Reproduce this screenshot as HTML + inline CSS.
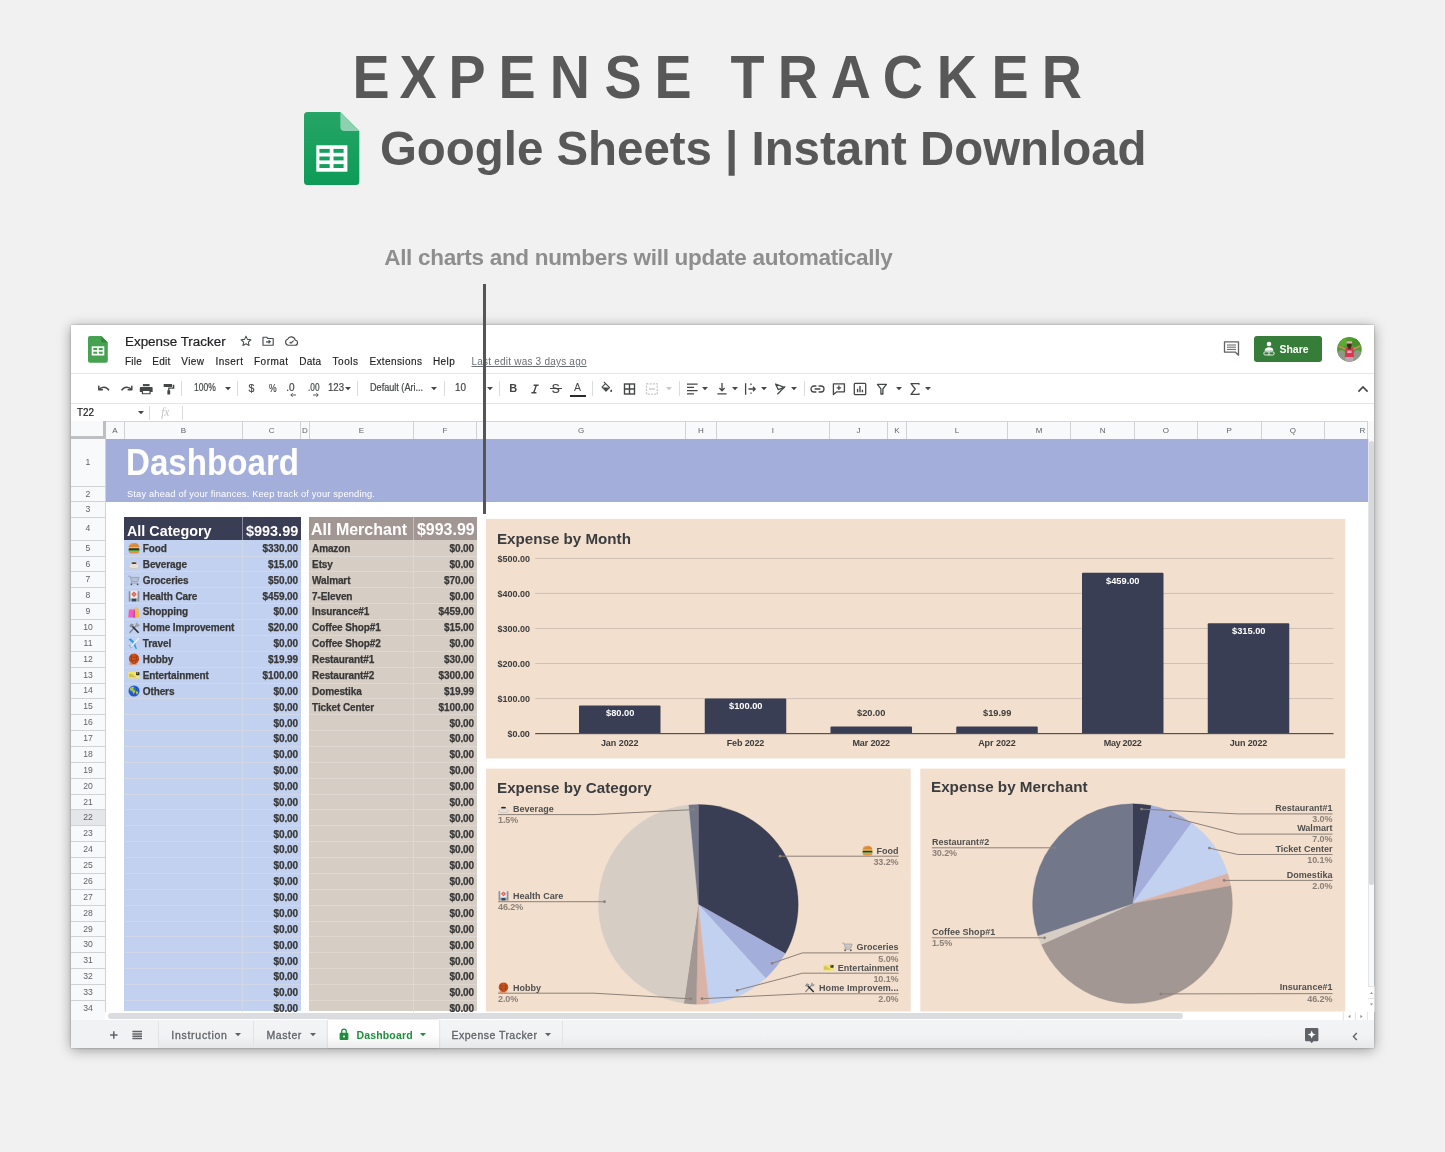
<!DOCTYPE html><html><head><meta charset="utf-8"><title>Expense Tracker</title><style>
html,body{margin:0;padding:0}body{width:1445px;height:1152px;overflow:hidden;position:relative;background:#f1f1f1;font-family:"Liberation Sans",sans-serif;}
.t{position:absolute;white-space:pre;margin:0;}.b{position:absolute;}svg{position:absolute;overflow:visible}
</style></head><body><div id="w" style="position:absolute;left:0;top:0;width:1445px;height:1152px;overflow:hidden;will-change:transform">
<div class="t" style="left:0;top:43px;width:1445px;height:68px;font-size:60.5px;line-height:68px;color:#585858;font-weight:bold;"><span style="position:absolute;left:350.57px;top:0;transform:scaleX(0.92);transform-origin:50% 50%;">E</span><span style="position:absolute;left:398.32px;top:0;transform:scaleX(0.92);transform-origin:50% 50%;">X</span><span style="position:absolute;left:446.68px;top:0;transform:scaleX(0.92);transform-origin:50% 50%;">P</span><span style="position:absolute;left:497.42px;top:0;transform:scaleX(0.92);transform-origin:50% 50%;">E</span><span style="position:absolute;left:548.05px;top:0;transform:scaleX(0.92);transform-origin:50% 50%;">N</span><span style="position:absolute;left:603.12px;top:0;transform:scaleX(0.92);transform-origin:50% 50%;">S</span><span style="position:absolute;left:652.82px;top:0;transform:scaleX(0.92);transform-origin:50% 50%;">E</span><span style="position:absolute;left:700px;top:0;opacity:0"> </span><span style="position:absolute;left:728.92px;top:0;transform:scaleX(0.92);transform-origin:50% 50%;">T</span><span style="position:absolute;left:776.34px;top:0;transform:scaleX(0.92);transform-origin:50% 50%;">R</span><span style="position:absolute;left:829.10px;top:0;transform:scaleX(0.92);transform-origin:50% 50%;">A</span><span style="position:absolute;left:881.02px;top:0;transform:scaleX(0.92);transform-origin:50% 50%;">C</span><span style="position:absolute;left:935.46px;top:0;transform:scaleX(0.92);transform-origin:50% 50%;">K</span><span style="position:absolute;left:990.37px;top:0;transform:scaleX(0.92);transform-origin:50% 50%;">E</span><span style="position:absolute;left:1040.04px;top:0;transform:scaleX(0.92);transform-origin:50% 50%;">R</span></div>
<div class="t" style="left:380.00px;top:121px;font-size:49px;line-height:54px;color:#585858;font-weight:bold;transform:scaleX(0.9674);transform-origin:0 0;">Google Sheets | Instant Download</div>
<div class="t" style="left:384.20px;top:245px;font-size:22.5px;line-height:25px;color:#8e8e8e;font-weight:bold;letter-spacing:-0.301px;">All charts and numbers will update automatically</div>
<svg style="left:303.5px;top:111.7px" width="55.3" height="73" viewBox="0 0 55.3 73">
<defs><linearGradient id="lg1" x1="0" y1="0" x2="0" y2="1"><stop offset="0" stop-color="#25a566"/><stop offset="1" stop-color="#0d9b57"/></linearGradient></defs>
<path d="M3.5 0H36.4L55.3 18.9V69.5a3.5 3.5 0 0 1-3.5 3.5H3.5A3.5 3.5 0 0 1 0 69.500V3.5A3.5 3.5 0 0 1 3.5 0Z" fill="url(#lg1)"/>
<path d="M36.4 0L55.3 18.9H40.4a4 4 0 0 1-4-4Z" fill="#8ed1b1"/>
<rect x="12.3" y="33.3" width="31.1" height="26.4" fill="#fff"/>
<g fill="#15a05d"><rect x="15.4" y="36.9" width="10.3" height="3.9"/><rect x="29.5" y="36.9" width="10.1" height="3.9"/>
<rect x="15.4" y="44.5" width="10.3" height="3.9"/><rect x="29.5" y="44.5" width="10.1" height="3.9"/>
<rect x="15.4" y="52.1" width="10.3" height="3.9"/><rect x="29.5" y="52.1" width="10.1" height="3.9"/></g>
</svg>
<div class="b" style="left:70.8px;top:324.7px;width:1303.4px;height:723.5px;background:#fff;box-shadow:0 1.5px 12px rgba(0,0,0,0.37),0 0 2px rgba(0,0,0,0.3);"></div>
<svg style="left:88.2px;top:335.8px" width="19.8" height="26.7" viewBox="0 0 19.8 26.7">
<path d="M2 0H13.2L19.8 6.6V24.7a2 2 0 0 1-2 2H2a2 2 0 0 1-2-2V2A2 2 0 0 1 2 0Z" fill="#46a150"/>
<path d="M13.2 0L19.8 6.6H14.6a1.4 1.4 0 0 1-1.4-1.4Z" fill="#2f8a3c"/>
<rect x="3.700" y="10.300" width="12.600" height="9.200" fill="#fff"/>
<g fill="#46a150"><rect x="5.300" y="12" width="3.900" height="2.100"/><rect x="10.800" y="12" width="3.900" height="2.100"/><rect x="5.300" y="15.700" width="3.900" height="2.100"/><rect x="10.800" y="15.700" width="3.900" height="2.100"/></g>
</svg>
<div class="t" style="left:124.70px;top:334px;font-size:13.7px;line-height:15px;color:#202124;transform:scaleX(0.9795);transform-origin:0 0;-webkit-text-stroke:0.2px #202124;">Expense Tracker</div>
<svg style="left:239px;top:334px" width="62" height="14" viewBox="0 0 62 14" fill="none" stroke="#4a4d51" stroke-width="1.150">
<path d="M7 1.6l1.600 3.600 3.900.4-2.900 2.600.8 3.800L7 10l-3.400 2 .8-3.800L1.500 5.600l3.900-.4Z" stroke-linejoin="round" transform="translate(7 7) scale(0.900) translate(-7 -7)"/>
<path d="M24 3.200h3.600l1.200 1.300h5.400v6.700H24Z" stroke-linejoin="round"/><path d="M27 7.800h4M29.600 6.200l1.600 1.600-1.600 1.600"/>
<path d="M49.500 11.200h6.400a2.500 2.500 0 0 0 .3-5 4 4 0 0 0-7.600-1 3.100 3.100 0 0 0 .9 6Z" stroke-linejoin="round"/><path d="M50.600 7.800l1.400 1.400 2.600-2.600"/>
</svg>
<div class="t" style="left:124.90px;top:356px;font-size:10px;line-height:11px;color:#202124;letter-spacing:0.269px;-webkit-text-stroke:0.15px #202124;">File</div>
<div class="t" style="left:152.30px;top:356px;font-size:10px;line-height:11px;color:#202124;letter-spacing:0.291px;-webkit-text-stroke:0.15px #202124;">Edit</div>
<div class="t" style="left:181.30px;top:356px;font-size:10px;line-height:11px;color:#202124;letter-spacing:0.425px;-webkit-text-stroke:0.15px #202124;">View</div>
<div class="t" style="left:215.60px;top:356px;font-size:10px;line-height:11px;color:#202124;letter-spacing:0.464px;-webkit-text-stroke:0.15px #202124;">Insert</div>
<div class="t" style="left:254.00px;top:356px;font-size:10px;line-height:11px;color:#202124;letter-spacing:0.488px;-webkit-text-stroke:0.15px #202124;">Format</div>
<div class="t" style="left:299.20px;top:356px;font-size:10px;line-height:11px;color:#202124;letter-spacing:0.219px;-webkit-text-stroke:0.15px #202124;">Data</div>
<div class="t" style="left:332.50px;top:356px;font-size:10px;line-height:11px;color:#202124;letter-spacing:0.548px;-webkit-text-stroke:0.15px #202124;">Tools</div>
<div class="t" style="left:369.40px;top:356px;font-size:10px;line-height:11px;color:#202124;letter-spacing:0.398px;-webkit-text-stroke:0.15px #202124;">Extensions</div>
<div class="t" style="left:432.90px;top:356px;font-size:10px;line-height:11px;color:#202124;letter-spacing:0.455px;-webkit-text-stroke:0.15px #202124;">Help</div>
<div class="t" style="left:471.50px;top:356px;font-size:10px;line-height:11px;color:#6a6e73;letter-spacing:0.213px;text-decoration:underline;">Last edit was 3 days ago</div>
<svg style="left:1223px;top:340px" width="17" height="17" viewBox="0 0 17 17" fill="none" stroke="#5f6368" stroke-width="1.3"><path d="M1.500 1.800h14v13.400l-3-3H1.500Z" stroke-linejoin="round"/><path d="M4 5h9M4 7.200h9M4 9.400h9" stroke-width="1"/></svg>
<div class="b" style="left:1254.40px;top:335.70px;width:67.40px;height:26.80px;background:#357d38;border-radius:3px;"></div>
<svg style="left:1263px;top:341px" width="12" height="15" viewBox="0 0 12 15" fill="#fff"><circle cx="6" cy="3" r="2.300"/><path d="M1.600 9.800c0-2.300 2-3.500 4.400-3.500s4.400 1.200 4.400 3.500Z"/><rect x="0.800" y="10.800" width="10.400" height="3.200" rx="1.600" fill="none" stroke="#fff" stroke-width="0.9"/><path d="M6 10.800v3.200" stroke="#fff" stroke-width="0.900"/></svg>
<div class="t" style="left:1279.40px;top:343px;font-size:10.5px;line-height:12px;color:#fff;font-weight:bold;">Share</div>
<svg style="left:1336.500px;top:336.500px" width="24.800" height="24.800" viewBox="0 0 24.800 24.800"><defs><clipPath id="av"><circle cx="12.400" cy="12.400" r="12.300"/></clipPath></defs>
<g clip-path="url(#av)"><rect width="25" height="25" fill="#4f9c2c"/><circle cx="6" cy="5" r="4" fill="#5cab33"/><circle cx="19" cy="6" r="4" fill="#46902a"/>
<ellipse cx="4.500" cy="19" rx="4.500" ry="6" fill="#8f9a86"/><ellipse cx="20.500" cy="19" rx="4.500" ry="6" fill="#8f9a86"/>
<path d="M2.200 9.200l7 3.200M22.600 9.200l-7 3.200" stroke="#c98c62" stroke-width="1.700" stroke-linecap="round"/>
<path d="M8.600 11.200c2.400-1 5.200-1 7.600 0l.8 9H7.800Z" fill="#dc3550"/><rect x="8.200" y="20" width="8.400" height="5" fill="#b9a3b3"/><rect x="10.200" y="13.600" width="4.400" height="2.400" fill="#e9a9b5"/>
<circle cx="12.400" cy="8" r="2.500" fill="#5a3324"/><path d="M10.800 7.200h3.200v5h-3.200Z" fill="#3a2118" opacity="0.700"/><rect x="9.600" y="4.300" width="5.600" height="2.300" rx="1.100" fill="#eaa7b6"/></g></svg>
<div class="b" style="left:70.80px;top:372.60px;width:1303.40px;height:1.00px;background:#e3e5e9;"></div>
<svg style="left:97px;top:381px" width="80" height="16" viewBox="0 0 80 16" fill="none" stroke="#444746" stroke-width="1.500">
<path d="M1.800 5.200v3.600h3.600" stroke-linejoin="round" stroke-linecap="round"/><path d="M2 8.600c2.600-3 7.400-3.400 10 .8"/>
<path d="M34.800 5.200v3.600h-3.600" stroke-linejoin="round" stroke-linecap="round"/><path d="M34.600 8.600c-2.600-3-7.400-3.400-10 .8"/>
<g stroke="none" fill="#444746" transform="translate(49.400 8) scale(0.880) translate(-49.400 -8)"><rect x="45.400" y="2.400" width="7.600" height="2.400"/><path d="M43.200 5.600h12a1.300 1.300 0 0 1 1.300 1.300v4.500h-2.300v2.600h-10v-2.600h-2.300V6.900a1.300 1.300 0 0 1 1.300-1.300Zm2.400 4.600v2.600h7.200v-2.600Z" fill-rule="evenodd"/>
</g><g stroke="none" fill="#444746" transform="translate(71.600 8) scale(0.880) translate(-71.600 -8)"><path d="M66 2.200h9.500v3.600H66Zm10.300 1h1.800v4.600h-5.600v1.500h.9v5h-3.200v-5h.9V6.400h5.200Z"/></g>
</svg>
<div class="b" style="left:181.20px;top:381.00px;width:1.00px;height:15.00px;background:#dadce0;"></div>
<div class="t" style="left:193.60px;top:382px;font-size:10px;line-height:11px;color:#444746;transform:scaleX(0.8523);transform-origin:0 0;-webkit-text-stroke:0.2px #444746;">100%</div>
<svg style="left:224.8px;top:387.3px" width="6" height="3.600" viewBox="0 0 6 3.600"><path d="M0 0h6L3 3.200Z" fill="#444746"/></svg>
<div class="b" style="left:236.90px;top:381.00px;width:1.00px;height:15.00px;background:#dadce0;"></div>
<div class="t" style="left:248.38px;top:382px;font-size:10.5px;line-height:12px;color:#444746;-webkit-text-stroke:0.2px #444746;">$</div>
<div class="t" style="left:268.60px;top:382px;font-size:10.5px;line-height:12px;color:#444746;transform:scaleX(0.8134);transform-origin:0 0;-webkit-text-stroke:0.2px #444746;">%</div>
<div class="t" style="left:286.13px;top:382px;font-size:10px;line-height:11px;color:#444746;-webkit-text-stroke:0.2px #444746;">.0</div>
<div class="t" style="left:308.05px;top:382px;font-size:10px;line-height:11px;color:#444746;transform:scaleX(0.8270);transform-origin:0 0;-webkit-text-stroke:0.2px #444746;">.00</div>
<svg style="left:289px;top:391.500px" width="32" height="6" viewBox="0 0 32 6" fill="none" stroke="#444746" stroke-width="0.900"><path d="M7 3H1.800M3.600 1.200L1.800 3l1.800 1.800"/><path d="M24 3h5.200M27.400 1.200L29.200 3l-1.800 1.800"/></svg>
<div class="t" style="left:327.60px;top:382px;font-size:10px;line-height:11px;color:#444746;transform:scaleX(0.9588);transform-origin:0 0;-webkit-text-stroke:0.2px #444746;">123</div>
<svg style="left:344.8px;top:387.3px" width="6" height="3.600" viewBox="0 0 6 3.600"><path d="M0 0h6L3 3.200Z" fill="#444746"/></svg>
<div class="b" style="left:357.30px;top:381.00px;width:1.00px;height:15.00px;background:#dadce0;"></div>
<div class="t" style="left:369.60px;top:382px;font-size:10px;line-height:11px;color:#444746;transform:scaleX(0.9099);transform-origin:0 0;-webkit-text-stroke:0.2px #444746;">Default (Ari...</div>
<svg style="left:430.7px;top:387.3px" width="6" height="3.600" viewBox="0 0 6 3.600"><path d="M0 0h6L3 3.200Z" fill="#444746"/></svg>
<div class="b" style="left:443.50px;top:381.00px;width:1.00px;height:15.00px;background:#dadce0;"></div>
<div class="t" style="left:455.30px;top:382px;font-size:10px;line-height:11px;color:#444746;transform:scaleX(0.9888);transform-origin:0 0;-webkit-text-stroke:0.2px #444746;">10</div>
<svg style="left:487.4px;top:387.3px" width="6" height="3.600" viewBox="0 0 6 3.600"><path d="M0 0h6L3 3.200Z" fill="#444746"/></svg>
<div class="b" style="left:499.00px;top:381.00px;width:1.00px;height:15.00px;background:#dadce0;"></div>
<div class="t" style="left:509.22px;top:382px;font-size:11px;line-height:12px;color:#444746;font-weight:bold;">B</div>
<svg style="left:529.800px;top:383.500px" width="10" height="10" viewBox="0 0 10 10" fill="none" stroke="#444746" stroke-width="1.300"><path d="M3.600 1.200h5M1.400 8.800h5M6.300 1.200L3.700 8.800" stroke-width="1.400"/></svg>
<div class="t" style="left:551.79px;top:382px;font-size:12px;line-height:14px;color:#444746;-webkit-text-stroke:0.2px #444746;">S</div>
<div class="b" style="left:549.80px;top:387.90px;width:12.00px;height:1.10px;background:#444746;"></div>
<div class="t" style="left:574.09px;top:381px;font-size:10.5px;line-height:12px;color:#444746;">A</div>
<div class="b" style="left:570.30px;top:394.80px;width:15.40px;height:2.40px;background:#2b2b2b;"></div>
<div class="b" style="left:592.00px;top:381.00px;width:1.00px;height:15.00px;background:#dadce0;"></div>
<svg style="left:599px;top:381px" width="64" height="16" viewBox="0 0 64 16" fill="none" stroke="#444746" stroke-width="1.300">
<path d="M6.600 2.600l4 4-3.600 3.600-4-4Z" stroke-width="1.100" stroke-linejoin="round"/><path d="M3.600 6.600h6.400L7 9.800Z" fill="#444746" stroke="none"/><path d="M6.600 2.600L5 1" stroke-width="1.100"/><path d="M12.200 8.200c.6.900 1 1.400 1 1.900a1 1 0 0 1-2 0c0-.5.400-1 1-1.900Z" fill="#444746" stroke="none"/>
<rect x="25.500" y="3" width="10" height="10" stroke-width="1.400"/><path d="M30.500 3v10M25.500 8h10" stroke-width="1.400"/>
<g stroke="#c4c7c5" stroke-dasharray="2 1.200"><rect x="47.500" y="2.800" width="10.800" height="10.400"/></g><path d="M50 8h6" stroke="#c4c7c5"/>
</svg>
<svg style="left:666.0px;top:387.3px" width="6" height="3.600" viewBox="0 0 6 3.600"><path d="M0 0h6L3 3.200Z" fill="#c4c7c5"/></svg>
<div class="b" style="left:678.90px;top:381.00px;width:1.00px;height:15.00px;background:#dadce0;"></div>
<svg style="left:685px;top:381px" width="110" height="16" viewBox="0 0 110 16" fill="none" stroke="#444746" stroke-width="1.300">
<path d="M2 3.200h10.600M2 6.400h7M2 9.600h10.600M2 12.800h7"/>
<path d="M37 2v7.600M34.400 7l2.600 2.800L39.600 7M32.400 12.800h9.200"/>
<path d="M60.600 2.200v11.600"/><path d="M63.500 8h6.500M68 5.800L70.200 8 68 10.200" /><path d="M66 2.600v2M66 11.400v2" stroke-dasharray="1.300 1"/>
<path d="M90.600 3l8.600 3.400-6 2.200Z" stroke-linejoin="round"/><path d="M92.400 13.200l7.800-7.800"/>
</svg>
<svg style="left:702.4px;top:387.3px" width="6" height="3.600" viewBox="0 0 6 3.600"><path d="M0 0h6L3 3.200Z" fill="#444746"/></svg>
<svg style="left:731.9px;top:387.3px" width="6" height="3.600" viewBox="0 0 6 3.600"><path d="M0 0h6L3 3.200Z" fill="#444746"/></svg>
<svg style="left:761.1px;top:387.3px" width="6" height="3.600" viewBox="0 0 6 3.600"><path d="M0 0h6L3 3.200Z" fill="#444746"/></svg>
<svg style="left:790.6px;top:387.3px" width="6" height="3.600" viewBox="0 0 6 3.600"><path d="M0 0h6L3 3.200Z" fill="#444746"/></svg>
<div class="b" style="left:803.50px;top:381.00px;width:1.00px;height:15.00px;background:#dadce0;"></div>
<svg style="left:809px;top:381px" width="112" height="16" viewBox="0 0 112 16" fill="none" stroke="#444746" stroke-width="1.300">
<path d="M7.400 5H5a3 3 0 0 0 0 6h2.400M9.600 5H12a3 3 0 0 1 0 6H9.600M5.600 8h5.800"/>
<path d="M24.400 2.800h11v8h-7.600l-3.400 2.800Z" stroke-linejoin="round"/><path d="M29.900 4.600v4.400M27.700 6.800h4.400"/>
<rect x="45.300" y="2.300" width="11.400" height="11.400" rx="1"/><path d="M48.600 11.200V7.800M51 11.200V5M53.400 11.200V8.800" stroke-width="1.400"/>
<path d="M68.400 3.400h9l-3.500 4.400v5.200h-2V7.800Z" stroke-linejoin="round"/>
<path d="M110 3.800V2.600h-8l4.200 5.400-4.200 5.400h8v-1.200" stroke-linejoin="round"/>
</svg>
<svg style="left:895.5px;top:387.3px" width="6" height="3.600" viewBox="0 0 6 3.600"><path d="M0 0h6L3 3.200Z" fill="#444746"/></svg>
<svg style="left:925.1px;top:387.3px" width="6" height="3.600" viewBox="0 0 6 3.600"><path d="M0 0h6L3 3.200Z" fill="#444746"/></svg>
<svg style="left:1357px;top:384.500px" width="12" height="8" viewBox="0 0 12 8" fill="none" stroke="#444746" stroke-width="1.600"><path d="M1.400 6.600L6 2l4.600 4.600"/></svg>
<div class="b" style="left:70.80px;top:403.00px;width:1303.40px;height:1.00px;background:#e3e5e9;"></div>
<div class="t" style="left:77.20px;top:407px;font-size:10px;line-height:11px;color:#202124;transform:scaleX(0.9864);transform-origin:0 0;-webkit-text-stroke:0.2px #202124;">T22</div>
<svg style="left:138px;top:410.800px" width="6" height="3.600" viewBox="0 0 6 3.600"><path d="M0 0h6L3 3.200Z" fill="#444746"/></svg>
<div class="b" style="left:148.80px;top:405.50px;width:1.00px;height:14.00px;background:#dadce0;"></div>
<div class="t" style="left:161.14px;top:406px;font-size:11.5px;line-height:12px;color:#c0c3c7;font-style:italic;font-family:'Liberation Serif',serif;">fx</div>
<div class="b" style="left:182.20px;top:405.50px;width:1.00px;height:14.00px;background:#dadce0;"></div>
<div class="b" style="left:70.80px;top:421.00px;width:1296.70px;height:18.00px;background:#f8f9fa;"></div>
<div class="b" style="left:70.80px;top:420.50px;width:1303.40px;height:1.00px;background:#d5d7db;"></div>
<div class="b" style="left:105.50px;top:438.50px;width:1262.00px;height:1.00px;background:#d0d2d6;"></div>
<div class="t" style="left:112.18px;top:426px;font-size:8px;line-height:9px;color:#5f6368;">A</div>
<div class="b" style="left:124.00px;top:421.00px;width:1.00px;height:18.00px;background:#d0d2d6;"></div>
<div class="t" style="left:180.83px;top:426px;font-size:8px;line-height:9px;color:#5f6368;">B</div>
<div class="b" style="left:242.00px;top:421.00px;width:1.00px;height:18.00px;background:#d0d2d6;"></div>
<div class="t" style="left:268.76px;top:426px;font-size:8px;line-height:9px;color:#5f6368;">C</div>
<div class="b" style="left:300.30px;top:421.00px;width:1.00px;height:18.00px;background:#d0d2d6;"></div>
<div class="t" style="left:302.11px;top:426px;font-size:8px;line-height:9px;color:#5f6368;">D</div>
<div class="b" style="left:308.70px;top:421.00px;width:1.00px;height:18.00px;background:#d0d2d6;"></div>
<div class="t" style="left:358.68px;top:426px;font-size:8px;line-height:9px;color:#5f6368;">E</div>
<div class="b" style="left:413.00px;top:421.00px;width:1.00px;height:18.00px;background:#d0d2d6;"></div>
<div class="t" style="left:442.60px;top:426px;font-size:8px;line-height:9px;color:#5f6368;">F</div>
<div class="b" style="left:476.10px;top:421.00px;width:1.00px;height:18.00px;background:#d0d2d6;"></div>
<div class="t" style="left:578.08px;top:426px;font-size:8px;line-height:9px;color:#5f6368;">G</div>
<div class="b" style="left:685.30px;top:421.00px;width:1.00px;height:18.00px;background:#d0d2d6;"></div>
<div class="t" style="left:698.01px;top:426px;font-size:8px;line-height:9px;color:#5f6368;">H</div>
<div class="b" style="left:715.50px;top:421.00px;width:1.00px;height:18.00px;background:#d0d2d6;"></div>
<div class="t" style="left:771.73px;top:426px;font-size:8px;line-height:9px;color:#5f6368;">I</div>
<div class="b" style="left:829.20px;top:421.00px;width:1.00px;height:18.00px;background:#d0d2d6;"></div>
<div class="t" style="left:856.50px;top:426px;font-size:8px;line-height:9px;color:#5f6368;">J</div>
<div class="b" style="left:886.80px;top:421.00px;width:1.00px;height:18.00px;background:#d0d2d6;"></div>
<div class="t" style="left:894.28px;top:426px;font-size:8px;line-height:9px;color:#5f6368;">K</div>
<div class="b" style="left:906.10px;top:421.00px;width:1.00px;height:18.00px;background:#d0d2d6;"></div>
<div class="t" style="left:954.82px;top:426px;font-size:8px;line-height:9px;color:#5f6368;">L</div>
<div class="b" style="left:1007.00px;top:421.00px;width:1.00px;height:18.00px;background:#d0d2d6;"></div>
<div class="t" style="left:1035.81px;top:426px;font-size:8px;line-height:9px;color:#5f6368;">M</div>
<div class="b" style="left:1070.30px;top:421.00px;width:1.00px;height:18.00px;background:#d0d2d6;"></div>
<div class="t" style="left:1099.66px;top:426px;font-size:8px;line-height:9px;color:#5f6368;">N</div>
<div class="b" style="left:1133.80px;top:421.00px;width:1.00px;height:18.00px;background:#d0d2d6;"></div>
<div class="t" style="left:1162.78px;top:426px;font-size:8px;line-height:9px;color:#5f6368;">O</div>
<div class="b" style="left:1197.00px;top:421.00px;width:1.00px;height:18.00px;background:#d0d2d6;"></div>
<div class="t" style="left:1226.58px;top:426px;font-size:8px;line-height:9px;color:#5f6368;">P</div>
<div class="b" style="left:1260.50px;top:421.00px;width:1.00px;height:18.00px;background:#d0d2d6;"></div>
<div class="t" style="left:1289.68px;top:426px;font-size:8px;line-height:9px;color:#5f6368;">Q</div>
<div class="b" style="left:1324.10px;top:421.00px;width:1.00px;height:18.00px;background:#d0d2d6;"></div>
<div class="t" style="left:1359.61px;top:426px;font-size:8px;line-height:9px;color:#5f6368;">R</div>
<div class="b" style="left:1367.00px;top:421.00px;width:1.00px;height:18.00px;background:#d0d2d6;"></div>
<div class="b" style="left:70.80px;top:421.00px;width:34.50px;height:18.00px;background:#f8f9fa;"></div>
<div class="b" style="left:102.50px;top:421.00px;width:3.00px;height:18.00px;background:#bdbfc3;"></div>
<div class="b" style="left:70.80px;top:436.00px;width:34.50px;height:3.00px;background:#bdbfc3;"></div>
<div class="b" style="left:70.80px;top:439.00px;width:34.50px;height:572.50px;background:#f8f9fa;"></div>
<div class="b" style="left:105.00px;top:439.00px;width:1.00px;height:572.50px;background:#d0d2d6;"></div>
<div class="b" style="left:70.80px;top:486.10px;width:34.50px;height:1.00px;background:#d0d2d6;"></div>
<div class="t" style="left:85.61px;top:457px;font-size:8.6px;line-height:10px;color:#5f6368;">1</div>
<div class="b" style="left:70.80px;top:501.00px;width:34.50px;height:1.00px;background:#d0d2d6;"></div>
<div class="t" style="left:85.61px;top:489px;font-size:8.6px;line-height:10px;color:#5f6368;">2</div>
<div class="b" style="left:70.80px;top:516.50px;width:34.50px;height:1.00px;background:#d0d2d6;"></div>
<div class="t" style="left:85.61px;top:504px;font-size:8.6px;line-height:10px;color:#5f6368;">3</div>
<div class="b" style="left:70.80px;top:539.70px;width:34.50px;height:1.00px;background:#d0d2d6;"></div>
<div class="t" style="left:85.61px;top:523px;font-size:8.6px;line-height:10px;color:#5f6368;">4</div>
<div class="b" style="left:70.80px;top:555.57px;width:34.50px;height:1.00px;background:#d0d2d6;"></div>
<div class="t" style="left:85.61px;top:543px;font-size:8.6px;line-height:10px;color:#5f6368;">5</div>
<div class="b" style="left:70.80px;top:571.44px;width:34.50px;height:1.00px;background:#d0d2d6;"></div>
<div class="t" style="left:85.61px;top:559px;font-size:8.6px;line-height:10px;color:#5f6368;">6</div>
<div class="b" style="left:70.80px;top:587.31px;width:34.50px;height:1.00px;background:#d0d2d6;"></div>
<div class="t" style="left:85.61px;top:574px;font-size:8.6px;line-height:10px;color:#5f6368;">7</div>
<div class="b" style="left:70.80px;top:603.18px;width:34.50px;height:1.00px;background:#d0d2d6;"></div>
<div class="t" style="left:85.61px;top:590px;font-size:8.6px;line-height:10px;color:#5f6368;">8</div>
<div class="b" style="left:70.80px;top:619.05px;width:34.50px;height:1.00px;background:#d0d2d6;"></div>
<div class="t" style="left:85.61px;top:606px;font-size:8.6px;line-height:10px;color:#5f6368;">9</div>
<div class="b" style="left:70.80px;top:634.92px;width:34.50px;height:1.00px;background:#d0d2d6;"></div>
<div class="t" style="left:83.22px;top:622px;font-size:8.6px;line-height:10px;color:#5f6368;">10</div>
<div class="b" style="left:70.80px;top:650.79px;width:34.50px;height:1.00px;background:#d0d2d6;"></div>
<div class="t" style="left:83.54px;top:638px;font-size:8.6px;line-height:10px;color:#5f6368;">11</div>
<div class="b" style="left:70.80px;top:666.66px;width:34.50px;height:1.00px;background:#d0d2d6;"></div>
<div class="t" style="left:83.22px;top:654px;font-size:8.6px;line-height:10px;color:#5f6368;">12</div>
<div class="b" style="left:70.80px;top:682.53px;width:34.50px;height:1.00px;background:#d0d2d6;"></div>
<div class="t" style="left:83.22px;top:670px;font-size:8.6px;line-height:10px;color:#5f6368;">13</div>
<div class="b" style="left:70.80px;top:698.40px;width:34.50px;height:1.00px;background:#d0d2d6;"></div>
<div class="t" style="left:83.22px;top:685px;font-size:8.6px;line-height:10px;color:#5f6368;">14</div>
<div class="b" style="left:70.80px;top:714.27px;width:34.50px;height:1.00px;background:#d0d2d6;"></div>
<div class="t" style="left:83.22px;top:701px;font-size:8.6px;line-height:10px;color:#5f6368;">15</div>
<div class="b" style="left:70.80px;top:730.14px;width:34.50px;height:1.00px;background:#d0d2d6;"></div>
<div class="t" style="left:83.22px;top:717px;font-size:8.6px;line-height:10px;color:#5f6368;">16</div>
<div class="b" style="left:70.80px;top:746.01px;width:34.50px;height:1.00px;background:#d0d2d6;"></div>
<div class="t" style="left:83.22px;top:733px;font-size:8.6px;line-height:10px;color:#5f6368;">17</div>
<div class="b" style="left:70.80px;top:761.88px;width:34.50px;height:1.00px;background:#d0d2d6;"></div>
<div class="t" style="left:83.22px;top:749px;font-size:8.6px;line-height:10px;color:#5f6368;">18</div>
<div class="b" style="left:70.80px;top:777.75px;width:34.50px;height:1.00px;background:#d0d2d6;"></div>
<div class="t" style="left:83.22px;top:765px;font-size:8.6px;line-height:10px;color:#5f6368;">19</div>
<div class="b" style="left:70.80px;top:793.62px;width:34.50px;height:1.00px;background:#d0d2d6;"></div>
<div class="t" style="left:83.22px;top:781px;font-size:8.6px;line-height:10px;color:#5f6368;">20</div>
<div class="b" style="left:70.80px;top:809.49px;width:34.50px;height:1.00px;background:#d0d2d6;"></div>
<div class="t" style="left:83.22px;top:797px;font-size:8.6px;line-height:10px;color:#5f6368;">21</div>
<div class="b" style="left:70.80px;top:809.99px;width:34.00px;height:15.87px;background:#e4e6ea;"></div>
<div class="b" style="left:70.80px;top:825.36px;width:34.50px;height:1.00px;background:#d0d2d6;"></div>
<div class="t" style="left:83.22px;top:812px;font-size:8.6px;line-height:10px;color:#5f6368;">22</div>
<div class="b" style="left:70.80px;top:841.23px;width:34.50px;height:1.00px;background:#d0d2d6;"></div>
<div class="t" style="left:83.22px;top:828px;font-size:8.6px;line-height:10px;color:#5f6368;">23</div>
<div class="b" style="left:70.80px;top:857.10px;width:34.50px;height:1.00px;background:#d0d2d6;"></div>
<div class="t" style="left:83.22px;top:844px;font-size:8.6px;line-height:10px;color:#5f6368;">24</div>
<div class="b" style="left:70.80px;top:872.97px;width:34.50px;height:1.00px;background:#d0d2d6;"></div>
<div class="t" style="left:83.22px;top:860px;font-size:8.6px;line-height:10px;color:#5f6368;">25</div>
<div class="b" style="left:70.80px;top:888.84px;width:34.50px;height:1.00px;background:#d0d2d6;"></div>
<div class="t" style="left:83.22px;top:876px;font-size:8.6px;line-height:10px;color:#5f6368;">26</div>
<div class="b" style="left:70.80px;top:904.71px;width:34.50px;height:1.00px;background:#d0d2d6;"></div>
<div class="t" style="left:83.22px;top:892px;font-size:8.6px;line-height:10px;color:#5f6368;">27</div>
<div class="b" style="left:70.80px;top:920.58px;width:34.50px;height:1.00px;background:#d0d2d6;"></div>
<div class="t" style="left:83.22px;top:908px;font-size:8.6px;line-height:10px;color:#5f6368;">28</div>
<div class="b" style="left:70.80px;top:936.45px;width:34.50px;height:1.00px;background:#d0d2d6;"></div>
<div class="t" style="left:83.22px;top:924px;font-size:8.6px;line-height:10px;color:#5f6368;">29</div>
<div class="b" style="left:70.80px;top:952.32px;width:34.50px;height:1.00px;background:#d0d2d6;"></div>
<div class="t" style="left:83.22px;top:939px;font-size:8.6px;line-height:10px;color:#5f6368;">30</div>
<div class="b" style="left:70.80px;top:968.19px;width:34.50px;height:1.00px;background:#d0d2d6;"></div>
<div class="t" style="left:83.22px;top:955px;font-size:8.6px;line-height:10px;color:#5f6368;">31</div>
<div class="b" style="left:70.80px;top:984.06px;width:34.50px;height:1.00px;background:#d0d2d6;"></div>
<div class="t" style="left:83.22px;top:971px;font-size:8.6px;line-height:10px;color:#5f6368;">32</div>
<div class="b" style="left:70.80px;top:999.93px;width:34.50px;height:1.00px;background:#d0d2d6;"></div>
<div class="t" style="left:83.22px;top:987px;font-size:8.6px;line-height:10px;color:#5f6368;">33</div>
<div class="t" style="left:83.22px;top:1003px;font-size:8.6px;line-height:10px;color:#5f6368;">34</div>
<div class="b" style="left:105.50px;top:439.00px;width:1262.00px;height:62.50px;background:#a3aeda;"></div>
<div class="t" style="left:126.30px;top:441px;font-size:37.6px;line-height:42px;color:#fff;font-weight:bold;transform:scaleX(0.8814);transform-origin:0 0;">Dashboard</div>
<div class="t" style="left:127.00px;top:489px;font-size:9.3px;line-height:10px;color:#fff;letter-spacing:0.163px;">Stay ahead of your finances. Keep track of your spending.</div>
<div class="b" style="left:124.30px;top:517.00px;width:176.50px;height:23.20px;background:#3a3e54;"></div>
<div class="b" style="left:309.20px;top:517.00px;width:167.80px;height:23.20px;background:#a39793;"></div>
<div class="b" style="left:124.30px;top:540.20px;width:176.50px;height:471.30px;background:#c2d1f0;"></div>
<div class="b" style="left:309.20px;top:540.20px;width:167.80px;height:471.30px;background:#d6cdc5;"></div>
<div class="b" style="left:124.30px;top:555.57px;width:176.50px;height:1.00px;background:#d0d7e6;"></div>
<div class="b" style="left:309.20px;top:555.57px;width:167.80px;height:1.00px;background:#ded8d2;"></div>
<div class="b" style="left:124.30px;top:571.44px;width:176.50px;height:1.00px;background:#d0d7e6;"></div>
<div class="b" style="left:309.20px;top:571.44px;width:167.80px;height:1.00px;background:#ded8d2;"></div>
<div class="b" style="left:124.30px;top:587.31px;width:176.50px;height:1.00px;background:#d0d7e6;"></div>
<div class="b" style="left:309.20px;top:587.31px;width:167.80px;height:1.00px;background:#ded8d2;"></div>
<div class="b" style="left:124.30px;top:603.18px;width:176.50px;height:1.00px;background:#d0d7e6;"></div>
<div class="b" style="left:309.20px;top:603.18px;width:167.80px;height:1.00px;background:#ded8d2;"></div>
<div class="b" style="left:124.30px;top:619.05px;width:176.50px;height:1.00px;background:#d0d7e6;"></div>
<div class="b" style="left:309.20px;top:619.05px;width:167.80px;height:1.00px;background:#ded8d2;"></div>
<div class="b" style="left:124.30px;top:634.92px;width:176.50px;height:1.00px;background:#d0d7e6;"></div>
<div class="b" style="left:309.20px;top:634.92px;width:167.80px;height:1.00px;background:#ded8d2;"></div>
<div class="b" style="left:124.30px;top:650.79px;width:176.50px;height:1.00px;background:#d0d7e6;"></div>
<div class="b" style="left:309.20px;top:650.79px;width:167.80px;height:1.00px;background:#ded8d2;"></div>
<div class="b" style="left:124.30px;top:666.66px;width:176.50px;height:1.00px;background:#d0d7e6;"></div>
<div class="b" style="left:309.20px;top:666.66px;width:167.80px;height:1.00px;background:#ded8d2;"></div>
<div class="b" style="left:124.30px;top:682.53px;width:176.50px;height:1.00px;background:#d0d7e6;"></div>
<div class="b" style="left:309.20px;top:682.53px;width:167.80px;height:1.00px;background:#ded8d2;"></div>
<div class="b" style="left:124.30px;top:698.40px;width:176.50px;height:1.00px;background:#d0d7e6;"></div>
<div class="b" style="left:309.20px;top:698.40px;width:167.80px;height:1.00px;background:#ded8d2;"></div>
<div class="b" style="left:124.30px;top:714.27px;width:176.50px;height:1.00px;background:#d0d7e6;"></div>
<div class="b" style="left:309.20px;top:714.27px;width:167.80px;height:1.00px;background:#ded8d2;"></div>
<div class="b" style="left:124.30px;top:730.14px;width:176.50px;height:1.00px;background:#d0d7e6;"></div>
<div class="b" style="left:309.20px;top:730.14px;width:167.80px;height:1.00px;background:#ded8d2;"></div>
<div class="b" style="left:124.30px;top:746.01px;width:176.50px;height:1.00px;background:#d0d7e6;"></div>
<div class="b" style="left:309.20px;top:746.01px;width:167.80px;height:1.00px;background:#ded8d2;"></div>
<div class="b" style="left:124.30px;top:761.88px;width:176.50px;height:1.00px;background:#d0d7e6;"></div>
<div class="b" style="left:309.20px;top:761.88px;width:167.80px;height:1.00px;background:#ded8d2;"></div>
<div class="b" style="left:124.30px;top:777.75px;width:176.50px;height:1.00px;background:#d0d7e6;"></div>
<div class="b" style="left:309.20px;top:777.75px;width:167.80px;height:1.00px;background:#ded8d2;"></div>
<div class="b" style="left:124.30px;top:793.62px;width:176.50px;height:1.00px;background:#d0d7e6;"></div>
<div class="b" style="left:309.20px;top:793.62px;width:167.80px;height:1.00px;background:#ded8d2;"></div>
<div class="b" style="left:124.30px;top:809.49px;width:176.50px;height:1.00px;background:#d0d7e6;"></div>
<div class="b" style="left:309.20px;top:809.49px;width:167.80px;height:1.00px;background:#ded8d2;"></div>
<div class="b" style="left:124.30px;top:825.36px;width:176.50px;height:1.00px;background:#d0d7e6;"></div>
<div class="b" style="left:309.20px;top:825.36px;width:167.80px;height:1.00px;background:#ded8d2;"></div>
<div class="b" style="left:124.30px;top:841.23px;width:176.50px;height:1.00px;background:#d0d7e6;"></div>
<div class="b" style="left:309.20px;top:841.23px;width:167.80px;height:1.00px;background:#ded8d2;"></div>
<div class="b" style="left:124.30px;top:857.10px;width:176.50px;height:1.00px;background:#d0d7e6;"></div>
<div class="b" style="left:309.20px;top:857.10px;width:167.80px;height:1.00px;background:#ded8d2;"></div>
<div class="b" style="left:124.30px;top:872.97px;width:176.50px;height:1.00px;background:#d0d7e6;"></div>
<div class="b" style="left:309.20px;top:872.97px;width:167.80px;height:1.00px;background:#ded8d2;"></div>
<div class="b" style="left:124.30px;top:888.84px;width:176.50px;height:1.00px;background:#d0d7e6;"></div>
<div class="b" style="left:309.20px;top:888.84px;width:167.80px;height:1.00px;background:#ded8d2;"></div>
<div class="b" style="left:124.30px;top:904.71px;width:176.50px;height:1.00px;background:#d0d7e6;"></div>
<div class="b" style="left:309.20px;top:904.71px;width:167.80px;height:1.00px;background:#ded8d2;"></div>
<div class="b" style="left:124.30px;top:920.58px;width:176.50px;height:1.00px;background:#d0d7e6;"></div>
<div class="b" style="left:309.20px;top:920.58px;width:167.80px;height:1.00px;background:#ded8d2;"></div>
<div class="b" style="left:124.30px;top:936.45px;width:176.50px;height:1.00px;background:#d0d7e6;"></div>
<div class="b" style="left:309.20px;top:936.45px;width:167.80px;height:1.00px;background:#ded8d2;"></div>
<div class="b" style="left:124.30px;top:952.32px;width:176.50px;height:1.00px;background:#d0d7e6;"></div>
<div class="b" style="left:309.20px;top:952.32px;width:167.80px;height:1.00px;background:#ded8d2;"></div>
<div class="b" style="left:124.30px;top:968.19px;width:176.50px;height:1.00px;background:#d0d7e6;"></div>
<div class="b" style="left:309.20px;top:968.19px;width:167.80px;height:1.00px;background:#ded8d2;"></div>
<div class="b" style="left:124.30px;top:984.06px;width:176.50px;height:1.00px;background:#d0d7e6;"></div>
<div class="b" style="left:309.20px;top:984.06px;width:167.80px;height:1.00px;background:#ded8d2;"></div>
<div class="b" style="left:124.30px;top:999.93px;width:176.50px;height:1.00px;background:#d0d7e6;"></div>
<div class="b" style="left:309.20px;top:999.93px;width:167.80px;height:1.00px;background:#ded8d2;"></div>
<div class="b" style="left:242.00px;top:517.00px;width:1.00px;height:494.50px;background:#d0d7e6;"></div>
<div class="b" style="left:413.00px;top:517.00px;width:1.00px;height:494.50px;background:#ded8d2;"></div>
<div class="b" style="left:242.00px;top:517.00px;width:1.00px;height:23.20px;background:#8a8da0;"></div>
<div class="b" style="left:413.00px;top:517.00px;width:1.00px;height:23.20px;background:#c4bcb8;"></div>
<div class="t" style="left:126.90px;top:522px;font-size:15.4px;line-height:17px;color:#fff;font-weight:bold;transform:scaleX(0.9321);transform-origin:0 0;">All Category</div>
<div class="t" style="left:246.00px;top:522px;font-size:15.4px;line-height:17px;color:#fff;font-weight:bold;transform:scaleX(0.9382);transform-origin:0 0;">$993.99</div>
<div class="t" style="left:311.30px;top:520px;font-size:16.6px;line-height:19px;color:#fff;font-weight:bold;transform:scaleX(0.9639);transform-origin:0 0;">All Merchant</div>
<div class="t" style="left:417.00px;top:520px;font-size:16.6px;line-height:19px;color:#fff;font-weight:bold;transform:scaleX(0.9603);transform-origin:0 0;">$993.99</div>
<div class="t" style="left:142.80px;top:543px;font-size:10px;line-height:11px;color:#383838;font-weight:bold;letter-spacing:-0.128px;-webkit-text-stroke:0.25px #383838;">Food</div>
<svg style="left:127.5px;top:542.1px" width="12" height="12" viewBox="0 0 12 12"><path d="M0.700 5.300C0.700 2.300 3 0.900 6 0.900s5.300 1.400 5.300 4.400Z" fill="#d98a3c"/><path d="M2 3.300C3 1.900 5 1.500 6.500 1.600" stroke="#f0b46a" stroke-width="0.700" fill="none"/><rect x="0.500" y="5.200" width="11" height="1.200" fill="#f2c230"/><rect x="0.600" y="6.200" width="10.800" height="2" rx="0.800" fill="#4a2a14"/><path d="M0.500 8.100h11v.9h-11Z" fill="#3f9b2f"/><path d="M0.800 8.900h10.400v.7a1.800 1.800 0 0 1-1.800 1.800H2.600A1.800 1.800 0 0 1 .8 9.600Z" fill="#e0913f"/></svg>
<div class="t" style="left:262.59px;top:543px;font-size:10px;line-height:11px;color:#383838;font-weight:bold;letter-spacing:-0.108px;-webkit-text-stroke:0.25px #383838;">$330.00</div>
<div class="t" style="left:312.10px;top:543px;font-size:10px;line-height:11px;color:#383838;font-weight:bold;letter-spacing:-0.136px;-webkit-text-stroke:0.25px #383838;">Amazon</div>
<div class="t" style="left:449.49px;top:543px;font-size:10px;line-height:11px;color:#383838;font-weight:bold;letter-spacing:-0.105px;-webkit-text-stroke:0.25px #383838;">$0.00</div>
<div class="t" style="left:142.80px;top:559px;font-size:10px;line-height:11px;color:#383838;font-weight:bold;letter-spacing:-0.118px;-webkit-text-stroke:0.25px #383838;">Beverage</div>
<svg style="left:127.5px;top:558.0px" width="12" height="12" viewBox="0 0 12 12"><ellipse cx="6" cy="8.600" rx="5.600" ry="2.300" fill="#cfc9c0"/><ellipse cx="6" cy="8.300" rx="4.600" ry="1.700" fill="#e9e5de"/><path d="M2.600 4.900h6.800c0 2.600-1.200 4.300-3.400 4.300S2.600 7.500 2.600 4.900Z" fill="#e4dfd6"/><ellipse cx="6" cy="5" rx="3.400" ry="1.300" fill="#f3efe8"/><ellipse cx="6" cy="5.100" rx="2.800" ry="0.950" fill="#3b2414"/></svg>
<div class="t" style="left:268.04px;top:559px;font-size:10px;line-height:11px;color:#383838;font-weight:bold;letter-spacing:-0.107px;-webkit-text-stroke:0.25px #383838;">$15.00</div>
<div class="t" style="left:312.10px;top:559px;font-size:10px;line-height:11px;color:#383838;font-weight:bold;letter-spacing:-0.111px;-webkit-text-stroke:0.25px #383838;">Etsy</div>
<div class="t" style="left:449.49px;top:559px;font-size:10px;line-height:11px;color:#383838;font-weight:bold;letter-spacing:-0.105px;-webkit-text-stroke:0.25px #383838;">$0.00</div>
<div class="t" style="left:142.80px;top:575px;font-size:10px;line-height:11px;color:#383838;font-weight:bold;letter-spacing:-0.109px;-webkit-text-stroke:0.25px #383838;">Groceries</div>
<svg style="left:127.5px;top:573.8px" width="12" height="12" viewBox="0 0 12 12"><path d="M0.400 2.200h1.600l1.800 5.400h5.800l1.400-4.200H2.600" fill="none" stroke="#8f96a3" stroke-width="0.800"/><path d="M3 4.400h8M3.400 5.800h7.400M4.600 3.400v4.200M6.400 3.400v4.200M8.200 3.400v4.200M9.800 3.400v4.200" stroke="#a9b0bd" stroke-width="0.450"/><path d="M3.800 7.600l-1 1.600h7.800" fill="none" stroke="#8f96a3" stroke-width="0.700"/><circle cx="3.400" cy="10.300" r="0.900" fill="#4b5060"/><circle cx="9.600" cy="10.300" r="0.900" fill="#4b5060"/></svg>
<div class="t" style="left:268.04px;top:575px;font-size:10px;line-height:11px;color:#383838;font-weight:bold;letter-spacing:-0.107px;-webkit-text-stroke:0.25px #383838;">$50.00</div>
<div class="t" style="left:312.10px;top:575px;font-size:10px;line-height:11px;color:#383838;font-weight:bold;letter-spacing:-0.117px;-webkit-text-stroke:0.25px #383838;">Walmart</div>
<div class="t" style="left:444.04px;top:575px;font-size:10px;line-height:11px;color:#383838;font-weight:bold;letter-spacing:-0.107px;-webkit-text-stroke:0.25px #383838;">$70.00</div>
<div class="t" style="left:142.80px;top:591px;font-size:10px;line-height:11px;color:#383838;font-weight:bold;letter-spacing:-0.106px;-webkit-text-stroke:0.25px #383838;">Health Care</div>
<svg style="left:127.5px;top:589.7px" width="12" height="12" viewBox="0 0 12 12"><rect x="0.800" y="1.400" width="10.400" height="10" fill="#a9aeb0"/><rect x="0.800" y="1.400" width="1.300" height="10" fill="#8b9092"/><rect x="9.900" y="1.400" width="1.300" height="10" fill="#8b9092"/><rect x="2.600" y="0.600" width="6.800" height="7.600" fill="#e9eceb"/><path d="M6 1.500l2.700 2.700L6 6.900 3.300 4.200Z" fill="#d9483f"/><path d="M6 2.700v3M4.500 4.200h3" stroke="#f3b1ab" stroke-width="0.700"/><rect x="3.800" y="8.800" width="4.400" height="2.600" fill="#2f4a66"/></svg>
<div class="t" style="left:262.59px;top:591px;font-size:10px;line-height:11px;color:#383838;font-weight:bold;letter-spacing:-0.108px;-webkit-text-stroke:0.25px #383838;">$459.00</div>
<div class="t" style="left:312.10px;top:591px;font-size:10px;line-height:11px;color:#383838;font-weight:bold;letter-spacing:-0.108px;-webkit-text-stroke:0.25px #383838;">7-Eleven</div>
<div class="t" style="left:449.49px;top:591px;font-size:10px;line-height:11px;color:#383838;font-weight:bold;letter-spacing:-0.105px;-webkit-text-stroke:0.25px #383838;">$0.00</div>
<div class="t" style="left:142.80px;top:606px;font-size:10px;line-height:11px;color:#383838;font-weight:bold;letter-spacing:-0.121px;-webkit-text-stroke:0.25px #383838;">Shopping</div>
<svg style="left:127.5px;top:605.6px" width="12" height="12" viewBox="0 0 12 12"><path d="M0.900 3.600h6l.5 8H.3Z" fill="#ee5cc0"/><path d="M5.800 2.600h4.600l.9 8.600H6.600Z" fill="#f0bd3e"/><path d="M6.800 3.600l.5 8H5.200l.6-8Z" fill="#c947a5"/><path d="M2.400 3.800c0-2.800 3-2.800 3 0M7.200 2.800c0-2.400 2.200-2.400 2.200 0" fill="none" stroke="#d9a0c8" stroke-width="0.500"/></svg>
<div class="t" style="left:273.49px;top:606px;font-size:10px;line-height:11px;color:#383838;font-weight:bold;letter-spacing:-0.105px;-webkit-text-stroke:0.25px #383838;">$0.00</div>
<div class="t" style="left:312.10px;top:606px;font-size:10px;line-height:11px;color:#383838;font-weight:bold;letter-spacing:-0.111px;-webkit-text-stroke:0.25px #383838;">Insurance#1</div>
<div class="t" style="left:438.59px;top:606px;font-size:10px;line-height:11px;color:#383838;font-weight:bold;letter-spacing:-0.108px;-webkit-text-stroke:0.25px #383838;">$459.00</div>
<div class="t" style="left:142.80px;top:622px;font-size:10px;line-height:11px;color:#383838;font-weight:bold;letter-spacing:-0.123px;-webkit-text-stroke:0.25px #383838;">Home Improvement</div>
<svg style="left:127.5px;top:621.5px" width="12" height="12" viewBox="0 0 12 12"><path d="M1.600 10.800L8.400 3.400" stroke="#7c8087" stroke-width="1.300"/><path d="M10.600 10.800L4 4" stroke="#24262b" stroke-width="1.500"/><path d="M1 4.200L3.200 1.400 6 2.600 3.400 5.400Z" fill="#8d9197"/><path d="M8 0.800l-.5 2.600 1.700 1.500 2.300-1.200c.4-1.200-.6-1.600-1.300-1.200l-.6-.5c.2-.9-.6-1.500-1.600-1.200Z" fill="#9a9ea5"/></svg>
<div class="t" style="left:268.04px;top:622px;font-size:10px;line-height:11px;color:#383838;font-weight:bold;letter-spacing:-0.107px;-webkit-text-stroke:0.25px #383838;">$20.00</div>
<div class="t" style="left:312.10px;top:622px;font-size:10px;line-height:11px;color:#383838;font-weight:bold;letter-spacing:-0.113px;-webkit-text-stroke:0.25px #383838;">Coffee Shop#1</div>
<div class="t" style="left:444.04px;top:622px;font-size:10px;line-height:11px;color:#383838;font-weight:bold;letter-spacing:-0.107px;-webkit-text-stroke:0.25px #383838;">$15.00</div>
<div class="t" style="left:142.80px;top:638px;font-size:10px;line-height:11px;color:#383838;font-weight:bold;letter-spacing:-0.101px;-webkit-text-stroke:0.25px #383838;">Travel</div>
<svg style="left:127.5px;top:637.3px" width="12" height="12" viewBox="0 0 12 12"><path d="M0.600 2.400L2.600 1.200 8.200 6.400 6.600 8Z" fill="#2f9be0"/><path d="M9.800 11.300L8.600 11.600 4.400 6.600 6.200 5Z" fill="#2f9be0" transform="rotate(8 6 6)"/><path d="M11.300 0.700c.6.700-.3 2.100-1.500 3.300L3.400 10.200l-2 .9.800-2.100L8.400 2.600C9.600 1.400 10.700 0.200 11.300 0.700Z" fill="#eceff1" stroke="#b3bcc4" stroke-width="0.300"/><path d="M0.500 8.200l2.200.2-.9 1.100Z" fill="#2f9be0"/><path d="M3.400 11.400l-.2-2.200-1.100.9Z" fill="#2f9be0"/></svg>
<div class="t" style="left:273.49px;top:638px;font-size:10px;line-height:11px;color:#383838;font-weight:bold;letter-spacing:-0.105px;-webkit-text-stroke:0.25px #383838;">$0.00</div>
<div class="t" style="left:312.10px;top:638px;font-size:10px;line-height:11px;color:#383838;font-weight:bold;letter-spacing:-0.113px;-webkit-text-stroke:0.25px #383838;">Coffee Shop#2</div>
<div class="t" style="left:449.49px;top:638px;font-size:10px;line-height:11px;color:#383838;font-weight:bold;letter-spacing:-0.105px;-webkit-text-stroke:0.25px #383838;">$0.00</div>
<div class="t" style="left:142.80px;top:654px;font-size:10px;line-height:11px;color:#383838;font-weight:bold;letter-spacing:-0.131px;-webkit-text-stroke:0.25px #383838;">Hobby</div>
<svg style="left:127.5px;top:653.2px" width="12" height="12" viewBox="0 0 12 12"><ellipse cx="5.200" cy="11" rx="4.600" ry="0.800" fill="#e2855a"/><circle cx="6" cy="5.700" r="5.200" fill="#c9531f"/><path d="M2 3.200c2.400 1.600 5.600 1.800 8.200.4M1.200 6.600c3 1.400 6.400 1.400 9.600-.2M3.600 1.400c-1 3-.4 6.600 1.800 9.400M7.600.9c1.400 3 1.200 6.800-.6 9.800" fill="none" stroke="#8c3210" stroke-width="0.550"/></svg>
<div class="t" style="left:268.04px;top:654px;font-size:10px;line-height:11px;color:#383838;font-weight:bold;letter-spacing:-0.107px;-webkit-text-stroke:0.25px #383838;">$19.99</div>
<div class="t" style="left:312.10px;top:654px;font-size:10px;line-height:11px;color:#383838;font-weight:bold;letter-spacing:-0.111px;-webkit-text-stroke:0.25px #383838;">Restaurant#1</div>
<div class="t" style="left:444.04px;top:654px;font-size:10px;line-height:11px;color:#383838;font-weight:bold;letter-spacing:-0.107px;-webkit-text-stroke:0.25px #383838;">$30.00</div>
<div class="t" style="left:142.80px;top:670px;font-size:10px;line-height:11px;color:#383838;font-weight:bold;letter-spacing:-0.109px;-webkit-text-stroke:0.25px #383838;">Entertainment</div>
<svg style="left:127.5px;top:669.1px" width="12" height="12" viewBox="0 0 12 12"><rect x="0.200" y="3" width="11.600" height="6.400" fill="#f3e470"/><path d="M1 5.400h3.600M1 6.600h5M1 7.800h6.800" stroke="#b9a935" stroke-width="0.700"/><rect x="8.200" y="3.200" width="3.200" height="3" fill="#222"/><rect x="9" y="3.700" width="1.200" height="1" fill="#d8c94a"/></svg>
<div class="t" style="left:262.59px;top:670px;font-size:10px;line-height:11px;color:#383838;font-weight:bold;letter-spacing:-0.108px;-webkit-text-stroke:0.25px #383838;">$100.00</div>
<div class="t" style="left:312.10px;top:670px;font-size:10px;line-height:11px;color:#383838;font-weight:bold;letter-spacing:-0.111px;-webkit-text-stroke:0.25px #383838;">Restaurant#2</div>
<div class="t" style="left:438.59px;top:670px;font-size:10px;line-height:11px;color:#383838;font-weight:bold;letter-spacing:-0.108px;-webkit-text-stroke:0.25px #383838;">$300.00</div>
<div class="t" style="left:142.80px;top:686px;font-size:10px;line-height:11px;color:#383838;font-weight:bold;letter-spacing:-0.113px;-webkit-text-stroke:0.25px #383838;">Others</div>
<svg style="left:127.5px;top:684.9px" width="12" height="12" viewBox="0 0 12 12"><circle cx="6" cy="6" r="5.500" fill="#2457c5"/><circle cx="4.800" cy="4.600" r="3.200" fill="#3b7be0" opacity="0.600"/><path d="M2.400 2.800c1-.9 2.400-1.400 3.400-.8.400.9-.8 1.400-.4 2.400.5.900 1.800.5 2 1.700 0 1.300-1.200 2.100-1.900 3.200-.6-.9-.3-1.900-.8-2.800C4 5.600 2.400 5.600 1.600 4.800Z" fill="#a9c93a"/><path d="M8.200 6.400c.8-.2 1.600.2 2 1-.2.900-.8 1.700-1.500 2.200-.5-.9-.8-2.200-.5-3.200Z" fill="#cfc93a"/></svg>
<div class="t" style="left:273.49px;top:686px;font-size:10px;line-height:11px;color:#383838;font-weight:bold;letter-spacing:-0.105px;-webkit-text-stroke:0.25px #383838;">$0.00</div>
<div class="t" style="left:312.10px;top:686px;font-size:10px;line-height:11px;color:#383838;font-weight:bold;letter-spacing:-0.118px;-webkit-text-stroke:0.25px #383838;">Domestika</div>
<div class="t" style="left:444.04px;top:686px;font-size:10px;line-height:11px;color:#383838;font-weight:bold;letter-spacing:-0.107px;-webkit-text-stroke:0.25px #383838;">$19.99</div>
<div class="t" style="left:273.49px;top:702px;font-size:10px;line-height:11px;color:#383838;font-weight:bold;letter-spacing:-0.105px;-webkit-text-stroke:0.25px #383838;">$0.00</div>
<div class="t" style="left:312.10px;top:702px;font-size:10px;line-height:11px;color:#383838;font-weight:bold;letter-spacing:-0.102px;-webkit-text-stroke:0.25px #383838;">Ticket Center</div>
<div class="t" style="left:438.59px;top:702px;font-size:10px;line-height:11px;color:#383838;font-weight:bold;letter-spacing:-0.108px;-webkit-text-stroke:0.25px #383838;">$100.00</div>
<div class="t" style="left:273.49px;top:718px;font-size:10px;line-height:11px;color:#383838;font-weight:bold;letter-spacing:-0.105px;-webkit-text-stroke:0.25px #383838;">$0.00</div>
<div class="t" style="left:449.49px;top:718px;font-size:10px;line-height:11px;color:#383838;font-weight:bold;letter-spacing:-0.105px;-webkit-text-stroke:0.25px #383838;">$0.00</div>
<div class="t" style="left:273.49px;top:733px;font-size:10px;line-height:11px;color:#383838;font-weight:bold;letter-spacing:-0.105px;-webkit-text-stroke:0.25px #383838;">$0.00</div>
<div class="t" style="left:449.49px;top:733px;font-size:10px;line-height:11px;color:#383838;font-weight:bold;letter-spacing:-0.105px;-webkit-text-stroke:0.25px #383838;">$0.00</div>
<div class="t" style="left:273.49px;top:749px;font-size:10px;line-height:11px;color:#383838;font-weight:bold;letter-spacing:-0.105px;-webkit-text-stroke:0.25px #383838;">$0.00</div>
<div class="t" style="left:449.49px;top:749px;font-size:10px;line-height:11px;color:#383838;font-weight:bold;letter-spacing:-0.105px;-webkit-text-stroke:0.25px #383838;">$0.00</div>
<div class="t" style="left:273.49px;top:765px;font-size:10px;line-height:11px;color:#383838;font-weight:bold;letter-spacing:-0.105px;-webkit-text-stroke:0.25px #383838;">$0.00</div>
<div class="t" style="left:449.49px;top:765px;font-size:10px;line-height:11px;color:#383838;font-weight:bold;letter-spacing:-0.105px;-webkit-text-stroke:0.25px #383838;">$0.00</div>
<div class="t" style="left:273.49px;top:781px;font-size:10px;line-height:11px;color:#383838;font-weight:bold;letter-spacing:-0.105px;-webkit-text-stroke:0.25px #383838;">$0.00</div>
<div class="t" style="left:449.49px;top:781px;font-size:10px;line-height:11px;color:#383838;font-weight:bold;letter-spacing:-0.105px;-webkit-text-stroke:0.25px #383838;">$0.00</div>
<div class="t" style="left:273.49px;top:797px;font-size:10px;line-height:11px;color:#383838;font-weight:bold;letter-spacing:-0.105px;-webkit-text-stroke:0.25px #383838;">$0.00</div>
<div class="t" style="left:449.49px;top:797px;font-size:10px;line-height:11px;color:#383838;font-weight:bold;letter-spacing:-0.105px;-webkit-text-stroke:0.25px #383838;">$0.00</div>
<div class="t" style="left:273.49px;top:813px;font-size:10px;line-height:11px;color:#383838;font-weight:bold;letter-spacing:-0.105px;-webkit-text-stroke:0.25px #383838;">$0.00</div>
<div class="t" style="left:449.49px;top:813px;font-size:10px;line-height:11px;color:#383838;font-weight:bold;letter-spacing:-0.105px;-webkit-text-stroke:0.25px #383838;">$0.00</div>
<div class="t" style="left:273.49px;top:829px;font-size:10px;line-height:11px;color:#383838;font-weight:bold;letter-spacing:-0.105px;-webkit-text-stroke:0.25px #383838;">$0.00</div>
<div class="t" style="left:449.49px;top:829px;font-size:10px;line-height:11px;color:#383838;font-weight:bold;letter-spacing:-0.105px;-webkit-text-stroke:0.25px #383838;">$0.00</div>
<div class="t" style="left:273.49px;top:844px;font-size:10px;line-height:11px;color:#383838;font-weight:bold;letter-spacing:-0.105px;-webkit-text-stroke:0.25px #383838;">$0.00</div>
<div class="t" style="left:449.49px;top:844px;font-size:10px;line-height:11px;color:#383838;font-weight:bold;letter-spacing:-0.105px;-webkit-text-stroke:0.25px #383838;">$0.00</div>
<div class="t" style="left:273.49px;top:860px;font-size:10px;line-height:11px;color:#383838;font-weight:bold;letter-spacing:-0.105px;-webkit-text-stroke:0.25px #383838;">$0.00</div>
<div class="t" style="left:449.49px;top:860px;font-size:10px;line-height:11px;color:#383838;font-weight:bold;letter-spacing:-0.105px;-webkit-text-stroke:0.25px #383838;">$0.00</div>
<div class="t" style="left:273.49px;top:876px;font-size:10px;line-height:11px;color:#383838;font-weight:bold;letter-spacing:-0.105px;-webkit-text-stroke:0.25px #383838;">$0.00</div>
<div class="t" style="left:449.49px;top:876px;font-size:10px;line-height:11px;color:#383838;font-weight:bold;letter-spacing:-0.105px;-webkit-text-stroke:0.25px #383838;">$0.00</div>
<div class="t" style="left:273.49px;top:892px;font-size:10px;line-height:11px;color:#383838;font-weight:bold;letter-spacing:-0.105px;-webkit-text-stroke:0.25px #383838;">$0.00</div>
<div class="t" style="left:449.49px;top:892px;font-size:10px;line-height:11px;color:#383838;font-weight:bold;letter-spacing:-0.105px;-webkit-text-stroke:0.25px #383838;">$0.00</div>
<div class="t" style="left:273.49px;top:908px;font-size:10px;line-height:11px;color:#383838;font-weight:bold;letter-spacing:-0.105px;-webkit-text-stroke:0.25px #383838;">$0.00</div>
<div class="t" style="left:449.49px;top:908px;font-size:10px;line-height:11px;color:#383838;font-weight:bold;letter-spacing:-0.105px;-webkit-text-stroke:0.25px #383838;">$0.00</div>
<div class="t" style="left:273.49px;top:924px;font-size:10px;line-height:11px;color:#383838;font-weight:bold;letter-spacing:-0.105px;-webkit-text-stroke:0.25px #383838;">$0.00</div>
<div class="t" style="left:449.49px;top:924px;font-size:10px;line-height:11px;color:#383838;font-weight:bold;letter-spacing:-0.105px;-webkit-text-stroke:0.25px #383838;">$0.00</div>
<div class="t" style="left:273.49px;top:940px;font-size:10px;line-height:11px;color:#383838;font-weight:bold;letter-spacing:-0.105px;-webkit-text-stroke:0.25px #383838;">$0.00</div>
<div class="t" style="left:449.49px;top:940px;font-size:10px;line-height:11px;color:#383838;font-weight:bold;letter-spacing:-0.105px;-webkit-text-stroke:0.25px #383838;">$0.00</div>
<div class="t" style="left:273.49px;top:956px;font-size:10px;line-height:11px;color:#383838;font-weight:bold;letter-spacing:-0.105px;-webkit-text-stroke:0.25px #383838;">$0.00</div>
<div class="t" style="left:449.49px;top:956px;font-size:10px;line-height:11px;color:#383838;font-weight:bold;letter-spacing:-0.105px;-webkit-text-stroke:0.25px #383838;">$0.00</div>
<div class="t" style="left:273.49px;top:971px;font-size:10px;line-height:11px;color:#383838;font-weight:bold;letter-spacing:-0.105px;-webkit-text-stroke:0.25px #383838;">$0.00</div>
<div class="t" style="left:449.49px;top:971px;font-size:10px;line-height:11px;color:#383838;font-weight:bold;letter-spacing:-0.105px;-webkit-text-stroke:0.25px #383838;">$0.00</div>
<div class="t" style="left:273.49px;top:987px;font-size:10px;line-height:11px;color:#383838;font-weight:bold;letter-spacing:-0.105px;-webkit-text-stroke:0.25px #383838;">$0.00</div>
<div class="t" style="left:449.49px;top:987px;font-size:10px;line-height:11px;color:#383838;font-weight:bold;letter-spacing:-0.105px;-webkit-text-stroke:0.25px #383838;">$0.00</div>
<div class="t" style="left:273.49px;top:1003px;font-size:10px;line-height:11px;color:#383838;font-weight:bold;letter-spacing:-0.105px;-webkit-text-stroke:0.25px #383838;">$0.00</div>
<div class="t" style="left:449.49px;top:1003px;font-size:10px;line-height:11px;color:#383838;font-weight:bold;letter-spacing:-0.105px;-webkit-text-stroke:0.25px #383838;">$0.00</div>
<svg style="left:0;top:0" width="1445" height="1152" viewBox="0 0 1445 1152"><defs><clipPath id="gc"><rect x="0" y="0" width="1445" height="1011.5"/></clipPath></defs><g clip-path="url(#gc)">
<rect x="486" y="518.9" width="859.2" height="239.60000000000002" fill="#f2dfcd"/>
<rect x="486" y="768.6" width="424.70000000000005" height="260" fill="#f2dfcd"/>
<rect x="920.3" y="768.6" width="424.9000000000001" height="260" fill="#f2dfcd"/>
<rect x="535.2" y="698.06" width="798.3" height="1" fill="#cfc0b3"/>
<rect x="535.2" y="663.02" width="798.3" height="1" fill="#cfc0b3"/>
<rect x="535.2" y="627.98" width="798.3" height="1" fill="#cfc0b3"/>
<rect x="535.2" y="592.94" width="798.3" height="1" fill="#cfc0b3"/>
<rect x="535.2" y="557.90" width="798.3" height="1" fill="#cfc0b3"/>
<path d="M579.00 733.6V706.57a1 1 0 0 1 1-1h79.500a1 1 0 0 1 1 1V733.6Z" fill="#3a3e54"/>
<path d="M704.75 733.6V699.56a1 1 0 0 1 1-1h79.500a1 1 0 0 1 1 1V733.6Z" fill="#3a3e54"/>
<path d="M830.50 733.6V727.59a1 1 0 0 1 1-1h79.500a1 1 0 0 1 1 1V733.6Z" fill="#3a3e54"/>
<path d="M956.25 733.6V727.60a1 1 0 0 1 1-1h79.500a1 1 0 0 1 1 1V733.6Z" fill="#3a3e54"/>
<path d="M1082.00 733.6V573.77a1 1 0 0 1 1-1h79.500a1 1 0 0 1 1 1V733.6Z" fill="#3a3e54"/>
<path d="M1207.75 733.6V624.22a1 1 0 0 1 1-1h79.500a1 1 0 0 1 1 1V733.6Z" fill="#3a3e54"/>
<rect x="535.2" y="733.0" width="798.3" height="1.200" fill="#55514e"/>
<path d="M698.3 904.4L698.30 804.50A99.9 99.9 0 0 1 785.23 953.62Z" fill="#3a3e54" stroke="#3a3e54" stroke-width="0.300"/><path d="M698.3 904.4L785.23 953.62A99.9 99.9 0 0 1 765.63 978.20Z" fill="#a3aedb" stroke="#a3aedb" stroke-width="0.300"/><path d="M698.3 904.4L765.63 978.20A99.9 99.9 0 0 1 709.01 1003.72Z" fill="#c2d1f0" stroke="#c2d1f0" stroke-width="0.300"/><path d="M698.3 904.4L709.01 1003.72A99.9 99.9 0 0 1 696.40 1004.28Z" fill="#d9b3a6" stroke="#d9b3a6" stroke-width="0.300"/><path d="M698.3 904.4L696.40 1004.28A99.9 99.9 0 0 1 683.83 1003.25Z" fill="#a39793" stroke="#a39793" stroke-width="0.300"/><path d="M698.3 904.4L683.83 1003.25A99.9 99.9 0 0 1 688.84 804.95Z" fill="#d6cdc5" stroke="#d6cdc5" stroke-width="0.300"/><path d="M698.3 904.4L688.84 804.95A99.9 99.9 0 0 1 698.30 804.50Z" fill="#73778a" stroke="#73778a" stroke-width="0.300"/>
<path d="M1132.5 903.7L1132.50 803.80A99.9 99.9 0 0 1 1151.33 805.59Z" fill="#3a3e54" stroke="#3a3e54" stroke-width="0.300"/><path d="M1132.5 903.7L1151.33 805.59A99.9 99.9 0 0 1 1191.53 823.10Z" fill="#a3aedb" stroke="#a3aedb" stroke-width="0.300"/><path d="M1132.5 903.7L1191.53 823.10A99.9 99.9 0 0 1 1227.74 873.55Z" fill="#c2d1f0" stroke="#c2d1f0" stroke-width="0.300"/><path d="M1132.5 903.7L1227.74 873.55A99.9 99.9 0 0 1 1230.78 885.80Z" fill="#d9b3a6" stroke="#d9b3a6" stroke-width="0.300"/><path d="M1132.5 903.7L1230.78 885.80A99.9 99.9 0 0 1 1041.30 944.47Z" fill="#a39793" stroke="#a39793" stroke-width="0.300"/><path d="M1132.5 903.7L1041.30 944.47A99.9 99.9 0 0 1 1037.85 935.65Z" fill="#d6cdc5" stroke="#d6cdc5" stroke-width="0.300"/><path d="M1132.5 903.7L1037.85 935.65A99.9 99.9 0 0 1 1132.50 803.80Z" fill="#73778a" stroke="#73778a" stroke-width="0.300"/>
<path d="M498.0 814.6L594.0 814.6L693.4 809.6" fill="none" stroke="#8c8078" stroke-width="1"/><circle cx="693.4" cy="809.6" r="1.400" fill="#8c8078"/>
<path d="M498.0 901.7L604.5 901.7" fill="none" stroke="#8c8078" stroke-width="1"/><circle cx="604.5" cy="901.7" r="1.400" fill="#8c8078"/>
<path d="M498.0 993.2L594.0 993.2L690.8 998.8" fill="none" stroke="#8c8078" stroke-width="1"/><circle cx="690.8" cy="998.8" r="1.400" fill="#8c8078"/>
<path d="M898.6 856.2L780.1 856.2" fill="none" stroke="#8c8078" stroke-width="1"/><circle cx="780.1" cy="856.2" r="1.400" fill="#8c8078"/>
<path d="M898.6 952.9L802.3 952.9L772.1 963.3" fill="none" stroke="#8c8078" stroke-width="1"/><circle cx="772.1" cy="963.3" r="1.400" fill="#8c8078"/>
<path d="M898.6 973.2L802.3 973.2L737.2 990.3" fill="none" stroke="#8c8078" stroke-width="1"/><circle cx="737.2" cy="990.3" r="1.400" fill="#8c8078"/>
<path d="M898.6 993.8L802.3 993.8L702.0 998.7" fill="none" stroke="#8c8078" stroke-width="1"/><circle cx="702.0" cy="998.7" r="1.400" fill="#8c8078"/>
<path d="M1332.5 813.9L1237.8 813.9L1141.5 809.1" fill="none" stroke="#8c8078" stroke-width="1"/><circle cx="1141.5" cy="809.1" r="1.400" fill="#8c8078"/>
<path d="M1332.5 834.1L1237.8 834.1L1170.1 816.6" fill="none" stroke="#8c8078" stroke-width="1"/><circle cx="1170.1" cy="816.6" r="1.400" fill="#8c8078"/>
<path d="M1332.5 854.5L1237.8 854.5L1209.4 848.1" fill="none" stroke="#8c8078" stroke-width="1"/><circle cx="1209.4" cy="848.1" r="1.400" fill="#8c8078"/>
<path d="M1332.5 880.4L1224.2 880.4" fill="none" stroke="#8c8078" stroke-width="1"/><circle cx="1224.2" cy="880.4" r="1.400" fill="#8c8078"/>
<path d="M1332.5 993.6L1160.8 993.9" fill="none" stroke="#8c8078" stroke-width="1"/><circle cx="1160.8" cy="993.9" r="1.400" fill="#8c8078"/>
<path d="M931.9 847.8L1055.0 847.8" fill="none" stroke="#8c8078" stroke-width="1"/><circle cx="1055.0" cy="847.8" r="1.400" fill="#8c8078"/>
<path d="M931.9 937.8L1044.6 937.8" fill="none" stroke="#8c8078" stroke-width="1"/><circle cx="1044.6" cy="937.8" r="1.400" fill="#8c8078"/>
</g></svg>
<div class="t" style="left:605.57px;top:707px;font-size:9.4px;line-height:11px;color:#fff;font-weight:bold;transform:scaleX(0.9885);transform-origin:0 0;">$80.00</div>
<div class="t" style="left:600.92px;top:738px;font-size:9px;line-height:10px;color:#3c3c3c;font-weight:bold;letter-spacing:-0.054px;">Jan 2022</div>
<div class="t" style="left:728.74px;top:700px;font-size:9.4px;line-height:11px;color:#fff;font-weight:bold;transform:scaleX(0.9892);transform-origin:0 0;">$100.00</div>
<div class="t" style="left:726.64px;top:738px;font-size:9px;line-height:10px;color:#3c3c3c;font-weight:bold;letter-spacing:-0.116px;">Feb 2022</div>
<div class="t" style="left:857.07px;top:707px;font-size:9.4px;line-height:11px;color:#3c3c3c;font-weight:bold;transform:scaleX(0.9885);transform-origin:0 0;">$20.00</div>
<div class="t" style="left:852.39px;top:738px;font-size:9px;line-height:10px;color:#3c3c3c;font-weight:bold;letter-spacing:-0.116px;">Mar 2022</div>
<div class="t" style="left:982.82px;top:707px;font-size:9.4px;line-height:11px;color:#3c3c3c;font-weight:bold;transform:scaleX(0.9885);transform-origin:0 0;">$19.99</div>
<div class="t" style="left:978.17px;top:738px;font-size:9px;line-height:10px;color:#3c3c3c;font-weight:bold;letter-spacing:-0.054px;">Apr 2022</div>
<div class="t" style="left:1105.99px;top:575px;font-size:9.4px;line-height:11px;color:#fff;font-weight:bold;transform:scaleX(0.9892);transform-origin:0 0;">$459.00</div>
<div class="t" style="left:1103.80px;top:738px;font-size:9px;line-height:10px;color:#3c3c3c;font-weight:bold;letter-spacing:-0.304px;">May 2022</div>
<div class="t" style="left:1231.74px;top:625px;font-size:9.4px;line-height:11px;color:#fff;font-weight:bold;transform:scaleX(0.9892);transform-origin:0 0;">$315.00</div>
<div class="t" style="left:1229.64px;top:738px;font-size:9px;line-height:10px;color:#3c3c3c;font-weight:bold;letter-spacing:-0.116px;">Jun 2022</div>
<div class="t" style="left:507.49px;top:729px;font-size:9px;line-height:10px;color:#3c3c3c;font-weight:bold;letter-spacing:-0.032px;">$0.00</div>
<div class="t" style="left:497.55px;top:694px;font-size:9px;line-height:10px;color:#3c3c3c;font-weight:bold;letter-spacing:-0.033px;">$100.00</div>
<div class="t" style="left:497.55px;top:659px;font-size:9px;line-height:10px;color:#3c3c3c;font-weight:bold;letter-spacing:-0.033px;">$200.00</div>
<div class="t" style="left:497.55px;top:624px;font-size:9px;line-height:10px;color:#3c3c3c;font-weight:bold;letter-spacing:-0.033px;">$300.00</div>
<div class="t" style="left:497.55px;top:589px;font-size:9px;line-height:10px;color:#3c3c3c;font-weight:bold;letter-spacing:-0.033px;">$400.00</div>
<div class="t" style="left:497.55px;top:554px;font-size:9px;line-height:10px;color:#3c3c3c;font-weight:bold;letter-spacing:-0.033px;">$500.00</div>
<div class="t" style="left:496.80px;top:530px;font-size:15px;line-height:17px;color:#3a3c40;font-weight:bold;transform:scaleX(1.0103);transform-origin:0 0;">Expense by Month</div>
<div class="t" style="left:497.00px;top:779px;font-size:15px;line-height:17px;color:#3a3c40;font-weight:bold;transform:scaleX(1.0134);transform-origin:0 0;">Expense by Category</div>
<div class="t" style="left:931.00px;top:778px;font-size:15px;line-height:17px;color:#3a3c40;font-weight:bold;transform:scaleX(1.0148);transform-origin:0 0;">Expense by Merchant</div>
<svg style="left:498.0px;top:802.7px" width="11" height="11" viewBox="0 0 12 12"><ellipse cx="6" cy="8.600" rx="5.600" ry="2.300" fill="#cfc9c0"/><ellipse cx="6" cy="8.300" rx="4.600" ry="1.700" fill="#e9e5de"/><path d="M2.600 4.900h6.800c0 2.600-1.200 4.300-3.400 4.300S2.600 7.500 2.600 4.900Z" fill="#e4dfd6"/><ellipse cx="6" cy="5" rx="3.400" ry="1.300" fill="#f3efe8"/><ellipse cx="6" cy="5.100" rx="2.800" ry="0.950" fill="#3b2414"/></svg><div class="t" style="left:513.00px;top:804px;font-size:9px;line-height:10px;color:#4f4f4f;font-weight:bold;letter-spacing:0.025px;">Beverage</div><div class="t" style="left:498.00px;top:815px;font-size:9px;line-height:10px;color:#8b8079;font-weight:bold;letter-spacing:-0.077px;">1.5%</div>
<svg style="left:498.0px;top:889.9px" width="11" height="11" viewBox="0 0 12 12"><rect x="0.800" y="1.400" width="10.400" height="10" fill="#a9aeb0"/><rect x="0.800" y="1.400" width="1.300" height="10" fill="#8b9092"/><rect x="9.900" y="1.400" width="1.300" height="10" fill="#8b9092"/><rect x="2.600" y="0.600" width="6.800" height="7.600" fill="#e9eceb"/><path d="M6 1.500l2.700 2.700L6 6.900 3.300 4.200Z" fill="#d9483f"/><path d="M6 2.700v3M4.500 4.200h3" stroke="#f3b1ab" stroke-width="0.700"/><rect x="3.800" y="8.800" width="4.400" height="2.600" fill="#2f4a66"/></svg><div class="t" style="left:513.00px;top:891px;font-size:9px;line-height:10px;color:#4f4f4f;font-weight:bold;letter-spacing:0.023px;">Health Care</div><div class="t" style="left:498.00px;top:902px;font-size:9px;line-height:10px;color:#8b8079;font-weight:bold;letter-spacing:-0.077px;">46.2%</div>
<svg style="left:498.0px;top:981.7px" width="11" height="11" viewBox="0 0 12 12"><ellipse cx="5.200" cy="11" rx="4.600" ry="0.800" fill="#e2855a"/><circle cx="6" cy="5.700" r="5.200" fill="#c9531f"/><path d="M2 3.200c2.400 1.600 5.600 1.800 8.200.4M1.200 6.600c3 1.400 6.400 1.400 9.600-.2M3.600 1.400c-1 3-.4 6.600 1.800 9.400M7.600.9c1.400 3 1.200 6.800-.6 9.800" fill="none" stroke="#8c3210" stroke-width="0.550"/></svg><div class="t" style="left:513.00px;top:983px;font-size:9px;line-height:10px;color:#4f4f4f;font-weight:bold;letter-spacing:0.028px;">Hobby</div><div class="t" style="left:498.00px;top:994px;font-size:9px;line-height:10px;color:#8b8079;font-weight:bold;letter-spacing:-0.077px;">2.0%</div>
<div class="t" style="left:876.52px;top:846px;font-size:9px;line-height:10px;color:#4f4f4f;font-weight:bold;letter-spacing:0.027px;">Food</div><svg style="left:862.0px;top:844.6px" width="11" height="11" viewBox="0 0 12 12"><path d="M0.700 5.300C0.700 2.300 3 0.900 6 0.900s5.300 1.400 5.300 4.400Z" fill="#d98a3c"/><path d="M2 3.300C3 1.900 5 1.500 6.500 1.600" stroke="#f0b46a" stroke-width="0.700" fill="none"/><rect x="0.500" y="5.200" width="11" height="1.200" fill="#f2c230"/><rect x="0.600" y="6.200" width="10.800" height="2" rx="0.800" fill="#4a2a14"/><path d="M0.500 8.100h11v.9h-11Z" fill="#3f9b2f"/><path d="M0.800 8.900h10.400v.7a1.800 1.800 0 0 1-1.800 1.800H2.600A1.800 1.800 0 0 1 .8 9.600Z" fill="#e0913f"/></svg><div class="t" style="left:873.38px;top:857px;font-size:9px;line-height:10px;color:#8b8079;font-weight:bold;letter-spacing:-0.077px;">33.2%</div>
<div class="t" style="left:856.38px;top:942px;font-size:9px;line-height:10px;color:#4f4f4f;font-weight:bold;letter-spacing:0.023px;">Groceries</div><svg style="left:841.9px;top:941.2px" width="11" height="11" viewBox="0 0 12 12"><path d="M0.400 2.200h1.600l1.800 5.400h5.800l1.400-4.200H2.600" fill="none" stroke="#8f96a3" stroke-width="0.800"/><path d="M3 4.400h8M3.400 5.800h7.400M4.600 3.400v4.200M6.400 3.400v4.200M8.200 3.400v4.200M9.800 3.400v4.200" stroke="#a9b0bd" stroke-width="0.450"/><path d="M3.800 7.600l-1 1.600h7.800" fill="none" stroke="#8f96a3" stroke-width="0.700"/><circle cx="3.400" cy="10.300" r="0.900" fill="#4b5060"/><circle cx="9.600" cy="10.300" r="0.900" fill="#4b5060"/></svg><div class="t" style="left:878.32px;top:954px;font-size:9px;line-height:10px;color:#8b8079;font-weight:bold;letter-spacing:-0.077px;">5.0%</div>
<div class="t" style="left:837.81px;top:963px;font-size:9px;line-height:10px;color:#4f4f4f;font-weight:bold;letter-spacing:0.023px;">Entertainment</div><svg style="left:823.3px;top:961.6px" width="11" height="11" viewBox="0 0 12 12"><rect x="0.200" y="3" width="11.600" height="6.400" fill="#f3e470"/><path d="M1 5.400h3.600M1 6.600h5M1 7.800h6.800" stroke="#b9a935" stroke-width="0.700"/><rect x="8.200" y="3.200" width="3.200" height="3" fill="#222"/><rect x="9" y="3.700" width="1.200" height="1" fill="#d8c94a"/></svg><div class="t" style="left:873.38px;top:974px;font-size:9px;line-height:10px;color:#8b8079;font-weight:bold;letter-spacing:-0.077px;">10.1%</div>
<div class="t" style="left:818.91px;top:983px;font-size:9px;line-height:10px;color:#4f4f4f;font-weight:bold;letter-spacing:0.111px;">Home Improvem...</div><svg style="left:804.3px;top:981.8px" width="11" height="11" viewBox="0 0 12 12"><path d="M1.600 10.800L8.400 3.400" stroke="#7c8087" stroke-width="1.300"/><path d="M10.600 10.800L4 4" stroke="#24262b" stroke-width="1.500"/><path d="M1 4.200L3.200 1.400 6 2.600 3.400 5.400Z" fill="#8d9197"/><path d="M8 0.800l-.5 2.600 1.700 1.500 2.300-1.200c.4-1.200-.6-1.600-1.300-1.200l-.6-.5c.2-.9-.6-1.500-1.600-1.200Z" fill="#9a9ea5"/></svg><div class="t" style="left:878.32px;top:994px;font-size:9px;line-height:10px;color:#8b8079;font-weight:bold;letter-spacing:-0.077px;">2.0%</div>
<div class="t" style="left:1275.21px;top:803px;font-size:9px;line-height:10px;color:#4f4f4f;font-weight:bold;letter-spacing:0.024px;">Restaurant#1</div><div class="t" style="left:1312.22px;top:814px;font-size:9px;line-height:10px;color:#8b8079;font-weight:bold;letter-spacing:-0.077px;">3.0%</div>
<div class="t" style="left:1297.16px;top:823px;font-size:9px;line-height:10px;color:#4f4f4f;font-weight:bold;letter-spacing:0.025px;">Walmart</div><div class="t" style="left:1312.22px;top:834px;font-size:9px;line-height:10px;color:#8b8079;font-weight:bold;letter-spacing:-0.077px;">7.0%</div>
<div class="t" style="left:1275.38px;top:844px;font-size:9px;line-height:10px;color:#4f4f4f;font-weight:bold;letter-spacing:0.022px;">Ticket Center</div><div class="t" style="left:1307.28px;top:855px;font-size:9px;line-height:10px;color:#8b8079;font-weight:bold;letter-spacing:-0.077px;">10.1%</div>
<div class="t" style="left:1286.77px;top:870px;font-size:9px;line-height:10px;color:#4f4f4f;font-weight:bold;letter-spacing:0.025px;">Domestika</div><div class="t" style="left:1312.22px;top:881px;font-size:9px;line-height:10px;color:#8b8079;font-weight:bold;letter-spacing:-0.077px;">2.0%</div>
<div class="t" style="left:1279.73px;top:982px;font-size:9px;line-height:10px;color:#4f4f4f;font-weight:bold;letter-spacing:0.024px;">Insurance#1</div><div class="t" style="left:1307.28px;top:994px;font-size:9px;line-height:10px;color:#8b8079;font-weight:bold;letter-spacing:-0.077px;">46.2%</div>
<div class="t" style="left:931.90px;top:837px;font-size:9px;line-height:10px;color:#4f4f4f;font-weight:bold;letter-spacing:0.024px;">Restaurant#2</div><div class="t" style="left:931.90px;top:848px;font-size:9px;line-height:10px;color:#8b8079;font-weight:bold;letter-spacing:-0.077px;">30.2%</div>
<div class="t" style="left:931.90px;top:927px;font-size:9px;line-height:10px;color:#4f4f4f;font-weight:bold;letter-spacing:0.024px;">Coffee Shop#1</div><div class="t" style="left:931.90px;top:938px;font-size:9px;line-height:10px;color:#8b8079;font-weight:bold;letter-spacing:-0.077px;">1.5%</div>
<div class="b" style="left:1367.50px;top:421.00px;width:6.50px;height:590.50px;background:#f8f9fa;"></div>
<div class="b" style="left:1367.50px;top:439.00px;width:0.80px;height:572.50px;background:#e3e5e9;"></div>
<div class="b" style="left:1369.00px;top:441.00px;width:4.50px;height:444.00px;background:#d8d9dc;border-radius:2.500px;"></div>
<svg style="left:1367.500px;top:986px" width="6.500" height="26" viewBox="0 0 6.500 26"><rect x="0" y="0" width="6.500" height="26" fill="#fff"/><path d="M0 .5h6.500M0 12.500h6.500" stroke="#dcdde0" stroke-width="0.800"/><path d="M2 8l1.500-2L5 8ZM2 17.500l1.500 2 1.500-2Z" fill="#8d9095"/></svg>
<div class="b" style="left:70.80px;top:1011.50px;width:1303.40px;height:8.80px;background:#fff;"></div>
<div class="b" style="left:70.80px;top:1011.50px;width:34.50px;height:8.80px;background:#f8f9fa;"></div>
<div class="b" style="left:107.50px;top:1012.80px;width:1075.00px;height:6.40px;background:#dadce0;border-radius:3.200px;"></div>
<svg style="left:1343px;top:1011.500px" width="31" height="8.800" viewBox="0 0 31 8.800"><path d="M.4 0v8.800M12.400 0v8.800M24.400 0v8.800" stroke="#dcdde0" stroke-width="0.800"/><path d="M7.400 2.800v3.400L5.200 4.500ZM17.400 2.800v3.400l2.200-1.700Z" fill="#8d9095"/></svg>
<div class="b" style="left:70.80px;top:1020.30px;width:1303.40px;height:27.90px;background:linear-gradient(#f3f4f5 0%,#f1f2f3 60%,#e7e8e9 100%);"></div>
<div class="b" style="left:70.80px;top:1020.30px;width:87.00px;height:27.90px;background:#f1f2f3;"></div>
<div class="b" style="left:328.00px;top:1020.30px;width:110.80px;height:27.90px;background:linear-gradient(#ffffff 0%,#fdfdfd 60%,#ececec 100%);box-shadow:0 0 2px rgba(0,0,0,0.18);"></div>
<svg style="left:108.500px;top:1029.500px" width="36" height="10" viewBox="0 0 36 10"><path d="M4.800 1.300v7.400M1.100 5h7.400" stroke="#5f6368" stroke-width="1.500"/><path d="M23.400 1.600h9.600M23.400 3.900h9.600M23.400 6.200h9.600M23.400 8.500h9.600" stroke="#5f6368" stroke-width="1.500"/></svg>
<div class="b" style="left:157.70px;top:1021.00px;width:1.00px;height:26.00px;background:#e2e3e5;"></div>
<div class="t" style="left:171.30px;top:1029px;font-size:10.5px;line-height:12px;color:#5f6368;letter-spacing:0.722px;-webkit-text-stroke:0.3px #5f6368;">Instruction</div>
<svg style="left:235.1px;top:1033.300px" width="6" height="3.600" viewBox="0 0 6 3.600"><path d="M0 0h6L3 3.200Z" fill="#5f6368"/></svg>
<div class="b" style="left:252.80px;top:1021.00px;width:1.00px;height:26.00px;background:#e2e3e5;"></div>
<div class="t" style="left:266.50px;top:1029px;font-size:10.5px;line-height:12px;color:#5f6368;letter-spacing:0.534px;-webkit-text-stroke:0.3px #5f6368;">Master</div>
<svg style="left:309.5px;top:1033.300px" width="6" height="3.600" viewBox="0 0 6 3.600"><path d="M0 0h6L3 3.200Z" fill="#5f6368"/></svg>
<svg style="left:338.800px;top:1028px" width="10" height="12.500" viewBox="0 0 10 12.500"><path d="M2.700 5V3.400a2.300 2.300 0 0 1 4.600 0V5" fill="none" stroke="#1e8e3e" stroke-width="1.300"/><rect x="0.600" y="4.800" width="8.800" height="7.200" rx="1" fill="#1e8e3e"/><circle cx="5" cy="8.400" r="1" fill="#fff"/></svg>
<div class="t" style="left:356.40px;top:1029px;font-size:10.5px;line-height:12px;color:#1e8e3e;font-weight:bold;letter-spacing:0.173px;">Dashboard</div>
<svg style="left:419.9px;top:1033.300px" width="6" height="3.600" viewBox="0 0 6 3.600"><path d="M0 0h6L3 3.200Z" fill="#1e8e3e"/></svg>
<div class="t" style="left:451.60px;top:1029px;font-size:10.5px;line-height:12px;color:#5f6368;letter-spacing:0.467px;-webkit-text-stroke:0.3px #5f6368;">Expense Tracker</div>
<svg style="left:544.8px;top:1033.300px" width="6" height="3.600" viewBox="0 0 6 3.600"><path d="M0 0h6L3 3.200Z" fill="#5f6368"/></svg>
<div class="b" style="left:561.80px;top:1021.00px;width:1.00px;height:26.00px;background:#e2e3e5;"></div>
<svg style="left:1304.800px;top:1028.400px" width="13.400" height="15.400" viewBox="0 0 13.400 15.400"><path d="M1.200 0h11a1.200 1.200 0 0 1 1.200 1.200v10.800a1.200 1.200 0 0 1-1.200 1.200H8.400L6.700 15.200 5 13.200H1.200A1.200 1.200 0 0 1 0 12V1.200A1.200 1.200 0 0 1 1.200 0Z" fill="#5f6368"/><path d="M6.700 2.600l1.200 2.800 2.800 1.200-2.800 1.200-1.200 2.800-1.200-2.800-2.800-1.200 2.800-1.200Z" fill="#fff"/></svg>
<svg style="left:1352px;top:1032px" width="6" height="9" viewBox="0 0 6 9"><path d="M4.800 1L1.400 4.500l3.400 3.500" fill="none" stroke="#5f6368" stroke-width="1.400"/></svg>
<div class="b" style="left:483.20px;top:284.20px;width:3.00px;height:229.50px;background:#555555;"></div>
</div></body></html>
